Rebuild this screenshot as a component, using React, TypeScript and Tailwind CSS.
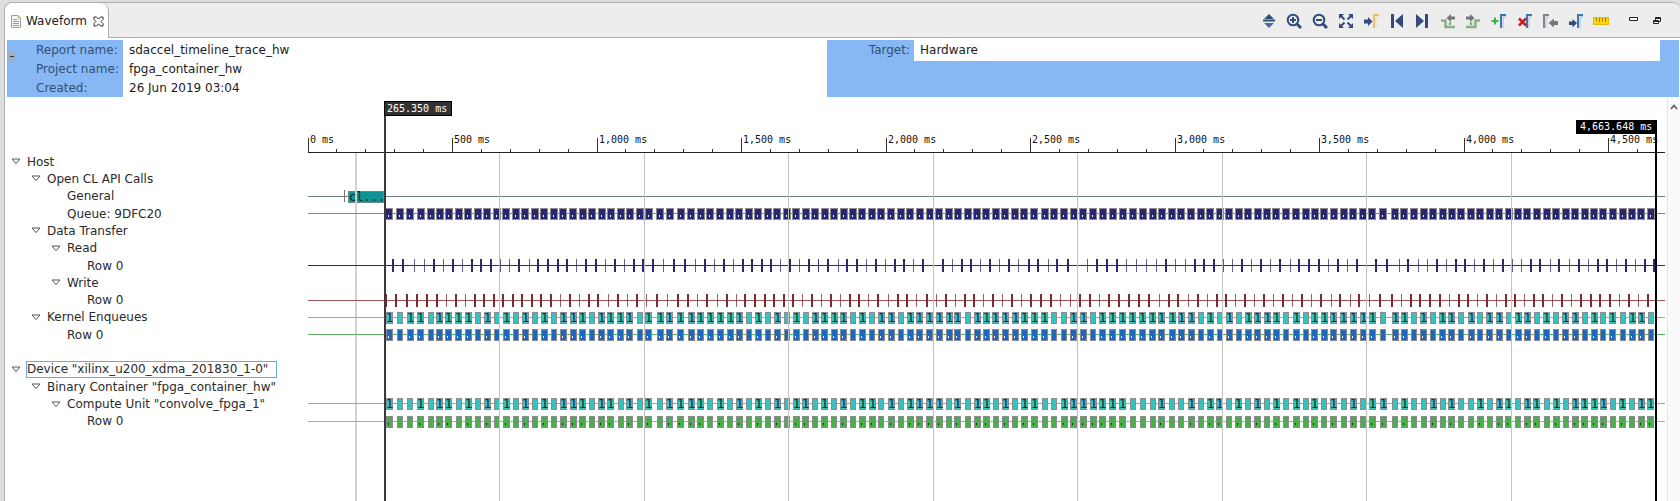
import React from "react";

type Segment = { start: number; marks: string };

/* Event positions are sampled three times per pixel, relative to each segment's start. */
const SAMPLES_PER_PX = 3;

/* Centre of every enqueue, followed by k / c flags: label fits on the kernel row / compute-unit row. */
const enqueueSegments: Segment[] = [
  {
    start: 380,
    marks:
      "27kc 59 91k 122kc 152 179kc 206kc 236k 264kc 293 321kc 350 378kc 407 435kc 465 493kc 522 550kc 580kc 608kc 636 665kc 692kc 722k 749kc 780 806kc 840k 869kc 902kc 934kc 962kc 991k 1020kc 1050k 1077kc 1107 1134kc 1163 1191kc 1220 1248kc 1277c 1306k",
  },
  {
    start: 810,
    marks:
      "44kc 73k 101kc 130 157kc 186c 214k 243kc 273 300kc 329kc 359kc 387kc 417k 443kc 473 501kc 529kc 557k 586kc 615k 643kc 673kc 704k 733 762c 791kc 820kc 850c 878kc 908kc 938kc 968k 998k 1028k 1055kc 1086k 1114k 1143kc 1172 1200kc 1229c 1257k 1286c 1314k",
  },
  {
    start: 1240,
    marks:
      "53kc 82k 109kc 138 168kc 197 224kc 253k 281kc 311k 339kc 369k 396kc 430c 466k 493kc 523 551k 579c 608k 635kc 664 693k 720c 749k 777kc 806c 835k 862kc 890c 920k 948c 977k 1005kc 1034c 1062kc 1090c 1118k 1148c 1176k 1204kc 1232c",
  },
];

/* Tick centres; w marks a transfer that is two pixels wide. */
const readSegments: Segment[] = [
  {
    start: 380,
    marks:
      "38w 68w 102 132 161w 190 218w 247 276w 303w 333w 361 389 418w 447 475w 505w 533w 562w 590 619w 647w 676 704w 733 762w 789w 819w 850 881w 914w 945 974w 1003 1032w 1060 1089w 1116w 1146w 1174w 1202 1231w 1259 1288w 1316",
  },
  {
    start: 810,
    marks:
      "26 55w 84 112w 140w 168 197w 226 254w 281w 310 339w 399w 427 456w 484w 512 541w 569 598w 626 656w 685w 714 742w 773w 801 831 860w 890w 920w 949 979 1009 1039 1067w 1097 1126 1155w 1182w 1212w 1240 1268 1297w",
  },
  {
    start: 1240,
    marks:
      "35 64w 92 121w 150 178w 206w 236w 265 293w 322 350w 379 408w 440w 477 505w 534 562 590w 619 647w 675w 703 732w 760 790w 818 845 874w 901w 930 958w 987 1016w 1045 1073w 1101w 1130 1158w 1187 1216w 1243w",
  },
];

const writeSegments: Segment[] = [
  {
    start: 380,
    marks:
      "17w 49w 82w 112w 142w 170w 198 227w 256 284w 312w 342w 368w 398w 427w 455w 484w 513w 541 570w 599 627w 655w 684 713w 741 770w 798 830w 861 893w 925w 953 982w 1011 1040w 1069 1096w 1125w 1154w 1183w 1212w 1239w 1267 1297w",
  },
  {
    start: 810,
    marks:
      "35 63w 91 121w 148w 176 205w 234 263w 290w 319 350w 378 407w 436 464w 492w 520 549w 577 606w 635 663w 694w 723w 752 782 811w 841w 869 898w 928w 958w 988w 1018w 1048 1077w 1105w 1134 1163w 1192 1220w 1248w 1276 1305w",
  },
  {
    start: 1240,
    marks:
      "43 72w 100 129w 158 186w 215 244w 273 301w 330 358w 387 420w 456w 485 514w 541w 571w 599w 628 656w 683w 712 741w 769 798w 825w 853 882w 910w 938 967w 995 1024w 1052w 1081w 1109w 1138 1166w 1195 1223w",
  },
];

const parse = (segments: Segment[]) =>
  segments.flatMap(({ start, marks }) =>
    marks.split(" ").map((mark) => ({
      x: start + parseInt(mark, 10) / SAMPLES_PER_PX,
      flags: mark.replace(/\d+/, ""),
    })),
  );

const enqueues = parse(enqueueSegments);
const reads = parse(readSegments);
const writes = parse(writeSegments);

const MONO = "font-['DejaVu_Sans_Mono',monospace]";
const AXIS_START = 308;
const AXIS_END = 1665;
const MAJOR = 144.5;

type BlocksProps = {
  y: number;
  fill: string;
  line: string;
  flag?: string;
  mark: "one" | "dot";
  markFill: string;
  wide?: boolean;
};

function Blocks({ y, fill, line, flag, mark, markFill, wide }: BlocksProps) {
  return (
    <g>
      <path d={`M${AXIS_START} ${y + 0.5}H${AXIS_END}`} stroke={line} />
      {enqueues.map(({ x, flags }, i) => {
        const labelled = !flag || flags.includes(flag);
        const w = wide ? 8 : labelled ? 7 : 6;
        const left = Math.round(x - w / 2);
        return (
          <g key={i}>
            <rect x={left + 0.5} y={y - 4.5} width={w - 1} height={11} fill={fill} stroke="#8b8b90" />
            {labelled && mark === "dot" && (
              <rect x={left + Math.floor(w / 2) - 1} y={y + 2} width={1} height={2} fill={markFill} />
            )}
            {labelled && mark === "one" && (
              <text x={left} y={y + 5} fill={markFill} className={`${MONO} text-[12px]`}>
                1
              </text>
            )}
          </g>
        );
      })}
    </g>
  );
}

function Ticks({ y, line, color, items }: { y: number; line: string; color: string; items: typeof reads }) {
  return (
    <g>
      <path d={`M${AXIS_START} ${y + 0.5}H${AXIS_END}`} stroke={line} />
      {items.map(({ x, flags }, i) => (
        <rect
          key={i}
          x={flags ? Math.round(x - 1) : Math.floor(x)}
          y={y - 6}
          width={flags ? 2 : 1}
          height={13}
          fill={color}
          opacity={flags ? 1 : 0.75}
        />
      ))}
    </g>
  );
}

function Timeline() {
  const majors = Array.from({ length: 10 }, (_, i) => i);
  const minors = Array.from({ length: 47 }, (_, i) => i).filter((i) => i % 5 !== 0);
  return (
    <svg className="min-h-[403px] min-w-0 flex-1" role="img" aria-label="Timeline trace" shapeRendering="crispEdges">
      <g transform="translate(-300 -98)">
        <path d="M308 152.5H1665" stroke="#222" />
        {majors.map((i) => {
          const x = Math.floor(AXIS_START + i * MAJOR);
          return (
            <g key={i}>
              <path d={`M${x + 0.5} 138V152`} stroke="#333" />
              <text x={x + 2} y={143} fill="#111" className={`${MONO} text-[10px]`}>
                {`${(i * 500).toLocaleString("en-US")} ms`}
              </text>
            </g>
          );
        })}
        {minors.map((i) => (
          <path key={i} d={`M${Math.floor(AXIS_START + (i * MAJOR) / 5) + 0.5} 149V152`} stroke="#333" />
        ))}

        <path d="M308 196.5H1665" stroke="#6f8080" />
        <path d="M344.5 190V202" stroke="#777" />
        <rect x={348.5} y={191.5} width={35} height={11} fill="#109394" stroke="#5f8c8c" />
        <path d="M356 153V3000" stroke="#d2d2d2" strokeWidth={2} />
        <text x={349} y={201} fill="#06282a" className={`${MONO} text-[12px]`}>
          cl...
        </text>

        <Blocks y={213} fill="#2b2673" line="#6d9090" mark="dot" markFill="#fff" wide />
        <Ticks y={265} line="#302c66" color="#2c2872" items={reads} />
        <Ticks y={300} line="#a05555" color="#7d2a30" items={writes} />
        <Blocks y={317} fill="#33c4c2" line="#55c8c6" flag="k" mark="one" markFill="#052b2b" />
        <Blocks y={334} fill="#1f66bd" line="#5fae5f" flag="k" mark="dot" markFill="#fff" />
        <Blocks y={403} fill="#33c4c2" line="#55c8c6" flag="c" mark="one" markFill="#052b2b" />
        <Blocks y={421} fill="#4aae4c" line="#8cc08c" flag="c" mark="dot" markFill="#0c330c" />

        {Array.from({ length: 8 }, (_, i) => (
          <path key={i} d={`M${Math.floor(499.7 + i * MAJOR) + 0.5} 153V3000`} stroke="#c2c2c2" />
        ))}

        <rect x={384} y={101} width={2} height={2900} fill="#3a3a3e" />
        <rect x={384.5} y={101.5} width={67} height={14} fill="#333" stroke="#000" />
        <text x={387} y={112} fill="#fff" className={`${MONO} text-[10px]`}>
          265.350 ms
        </text>
        <rect x={1655} y={120} width={2} height={2900} fill="#000" />
        <rect x={1576} y={120} width={81} height={14} fill="#000" />
        <text x={1580} y={130} fill="#fff" className={`${MONO} text-[10px]`}>
          4,663.648 ms
        </text>
      </g>
    </svg>
  );
}

const rows: { label: string; depth: number; leaf?: boolean; selected?: boolean }[] = [
  { label: "Host", depth: 0 },
  { label: "Open CL API Calls", depth: 1 },
  { label: "General", depth: 2, leaf: true },
  { label: "Queue: 9DFC20", depth: 2, leaf: true },
  { label: "Data Transfer", depth: 1 },
  { label: "Read", depth: 2 },
  { label: "Row 0", depth: 3, leaf: true },
  { label: "Write", depth: 2 },
  { label: "Row 0", depth: 3, leaf: true },
  { label: "Kernel Enqueues", depth: 1 },
  { label: "Row 0", depth: 2, leaf: true },
  { label: "", depth: 0, leaf: true },
  { label: 'Device "xilinx_u200_xdma_201830_1-0"', depth: 0, selected: true },
  { label: 'Binary Container "fpga_container_hw"', depth: 1 },
  { label: 'Compute Unit "convolve_fpga_1"', depth: 2 },
  { label: "Row 0", depth: 3, leaf: true },
];

const indents = ["pl-[6px]", "pl-[26px]", "pl-[46px]", "pl-[66px]"];

function Tree() {
  return (
    <ul className="mt-[55px] flex h-[277px] w-[295px] shrink-0 flex-col text-[12px] leading-none text-[#2a2a2a]">
      {rows.map((row, i) => (
        <li key={i} className={`flex min-h-0 flex-1 items-center whitespace-nowrap ${indents[row.depth]}`}>
          {row.leaf ? (
            <span className="w-4" />
          ) : (
            <button aria-label={`Collapse ${row.label}`} className="w-4">
              <svg width="10" height="7" viewBox="0 0 10 7" fill="none" stroke="#555">
                <path d="M1 1h8L5 5.6z" />
              </svg>
            </button>
          )}
          <span
            className={
              row.selected
                ? "-ml-px flex h-[17px] w-[251px] items-center border border-[#6ea8d8]"
                : "flex h-[17px] items-center"
            }
          >
            {row.label}
          </span>
        </li>
      ))}
    </ul>
  );
}

const NAVY = "#34497c";
const arrowRight = "M1 6.5h4V4l4.5 4.5L5 13v-2.5H1z";

const Edge = ({ x, color, light }: { x: number; color: string; light: string }) => (
  <>
    <path d={`M${x} 15V2h5`} stroke={color} strokeWidth={2} />
    <path d={`M${x + 2} 15V4h3`} stroke={light} strokeWidth={1} />
  </>
);

const tools: { name: string; art: React.ReactNode }[] = [
  {
    name: "Fit vertically",
    art: (
      <g>
        <path d="M8 1l5 5H3z" fill="#2d5277" />
        <path d="M2 7.5h12" stroke="#2d5277" strokeWidth={2} />
        <path d="M3 10h10l-5 5z" fill="#4a6f98" />
      </g>
    ),
  },
  {
    name: "Zoom in",
    art: (
      <g stroke={NAVY} strokeWidth={2}>
        <circle cx="7" cy="7" r="5.3" />
        <path d="M11 11l4 4" strokeWidth={3} />
        <path d="M4 7h6M7 4v6" />
      </g>
    ),
  },
  {
    name: "Zoom out",
    art: (
      <g stroke={NAVY} strokeWidth={2}>
        <circle cx="7" cy="7" r="5.3" />
        <path d="M11 11l4 4" strokeWidth={3} />
        <path d="M4 7h6" />
      </g>
    ),
  },
  {
    name: "Zoom fit",
    art: (
      <g>
        <path d="M1 1h5L1 6zM15 1v5l-5-5zM1 15v-5l5 5zM15 15h-5l5-5z" fill={NAVY} />
        <path d="M3 3l3.5 3.5M13 3L9.5 6.5M3 13l3.5-3.5M13 13L9.5 9.5" stroke={NAVY} strokeWidth={2} />
      </g>
    ),
  },
  {
    name: "Go to cursor",
    art: (
      <g>
        <path d={arrowRight} fill={NAVY} />
        <Edge x={11} color="#e3c468" light="#f0dca0" />
      </g>
    ),
  },
  {
    name: "Go to start",
    art: (
      <g fill={NAVY}>
        <path d="M2 1h3v14H2zM14 1v14L6 8z" />
      </g>
    ),
  },
  {
    name: "Go to end",
    art: (
      <g fill={NAVY}>
        <path d="M11 1h3v14h-3zM2 1v14l8-7z" />
      </g>
    ),
  },
  {
    name: "Previous transition",
    art: (
      <g>
        <path d="M1 7.5h4.5v6.5H15M10 9v3" stroke="#8bae88" strokeWidth={2.5} />
        <path d="M15 3.5h-4V1L6.5 5l4.500 4V6.500h4z" fill="#73767c" />
      </g>
    ),
  },
  {
    name: "Next transition",
    art: (
      <g>
        <path d="M15 7.5h-4.500v6.500H1M6 9v3" stroke="#8bae88" strokeWidth={2.5} />
        <path d="M1 3.5h4V1l4.500 4L5 9V6.500H1z" fill="#73767c" />
      </g>
    ),
  },
  {
    name: "Add marker",
    art: (
      <g>
        <path d="M0.5 8h7M4 4.500v7" stroke="#36b83c" strokeWidth={2} />
        <Edge x={10} color="#3a78ad" light="#93c3e4" />
      </g>
    ),
  },
  {
    name: "Delete marker",
    art: (
      <g>
        <Edge x={10} color="#3a78ad" light="#93c3e4" />
        <path d="M2 5.5l7 7M9 5.5l-7 7" stroke="#d01820" strokeWidth={2.5} />
      </g>
    ),
  },
  {
    name: "Previous marker",
    art: (
      <g>
        <Edge x={2} color="#7c8790" light="#b9c0c5" />
        <path d="M16 8h-4V5.5L6.500 10l5.500 4.500V12h4z" fill="#73767c" />
      </g>
    ),
  },
  {
    name: "Next marker",
    art: (
      <g>
        <path d="M1 8.5h3.500V6L9 10l-4.500 4.500V12H1z" fill={NAVY} />
        <Edge x={10} color="#3a78ad" light="#93c3e4" />
      </g>
    ),
  },
  {
    name: "Floating ruler",
    art: (
      <g>
        <rect x="0.5" y="4.5" width="15" height="7" fill="#fbd40d" stroke="#e6b800" />
        <path d="M3.5 5v3M6.5 5v4M9.5 5v3M12.5 5v4" stroke="#a67c00" />
      </g>
    ),
  },
];

function TitleBar() {
  return (
    <header className="flex h-[35px] items-stretch rounded-t-lg border-b border-[#adadad] bg-[#ededed]">
      <div className="-mb-px flex w-[104px] items-center rounded-t-lg border-r border-[#adadad] bg-white pl-[6px] pt-px text-[12px] text-[#222]">
        <svg width="10" height="13" viewBox="0 0 10 13" fill="none" className="mr-[5px]">
          <path d="M0.5 0.5H7l2.500 2.500v9.500h-9z" fill="#f2f7fc" stroke="#9aa38c" />
          <path d="M7 0.5V3h2.5" stroke="#c8a860" />
          <path d="M2 4.5h4M2 6.5h6M2 8.5h6M2 10.5h6" stroke="#7ba2d2" />
        </svg>
        <span className="whitespace-nowrap">Waveform</span>
        <button aria-label="Close Waveform" className="ml-[6px]">
          <svg width="11" height="11" viewBox="0 0 11 11" fill="#fff" stroke="#333">
            <path d="M1 1h2.500l2 2.200L7.500 1H10v2.500L8 5.500l2 2V10H7.500l-2-2.200L3.500 10H1V7.500l2-2-2-2z" />
          </svg>
        </button>
      </div>
      <div className="ml-auto flex items-center pt-px">
        <div className="flex w-[358px]">
          {tools.map((tool) => (
            <button key={tool.name} aria-label={tool.name} className="flex flex-1 justify-center">
              <svg width="16" height="16" viewBox="0 0 16 16" fill="none">
                {tool.art}
              </svg>
            </button>
          ))}
        </div>
        <button aria-label="Minimize" className="ml-[7px] flex w-[24px] justify-center">
          <svg width="11" height="16" viewBox="0 0 11 16" fill="#fff" stroke="#222">
            <path d="M1.5 4.5h8v3h-8z" />
          </svg>
        </button>
        <button aria-label="Restore" className="mr-[11px] flex w-[24px] justify-center">
          <svg width="9" height="16" viewBox="0 0 9 16" fill="#fff" stroke="#222">
            <path d="M2.5 4.5h5v4h-5zM2.5 5.5h5M0.5 7.5h5v3h-5zM0.5 8.5h5" />
          </svg>
        </button>
      </div>
    </header>
  );
}

function Details() {
  return (
    <div className="mt-[2px] flex h-[57px] pl-[2px] text-[12px] leading-[19px] text-[#1c1c1c]">
      <div className="flex flex-1">
        <div className="flex w-[116px] shrink-0 bg-[#87b8f5] text-[#31506f]">
          <button
            aria-label="Collapse details"
            className="mt-[12px] flex h-[9px] w-[9px] items-center justify-center bg-[#9ab0c8]"
          >
            <span className="h-px w-[4px] bg-[#333]" />
          </button>
          <div className="ml-[20px] whitespace-nowrap pt-px">
            <div>Report name:</div>
            <div>Project name:</div>
            <div>Created:</div>
          </div>
        </div>
        <div className="pl-[6px] pt-px">
          <div>sdaccel_timeline_trace_hw</div>
          <div>fpga_container_hw</div>
          <div>26 Jun 2019 03:04</div>
        </div>
      </div>
      <div className="mr-px flex w-[852px] items-start bg-[#87b8f5]">
        <div className="w-[87px] pr-[4px] pt-px text-right text-[#31506f]">Target:</div>
        <div className="mr-[19px] h-[21px] flex-1 bg-white pl-[6px] pt-px">Hardware</div>
      </div>
    </div>
  );
}

export default function App() {
  return (
    <div className="flex min-h-screen flex-col overflow-hidden bg-[#dedede] pl-[4px] pt-[2px] font-['DejaVu_Sans',sans-serif]">
      <main className="flex flex-1 flex-col rounded-t-lg border-l border-t border-[#adadad] bg-white">
        <TitleBar />
        <Details />
        <section className="mt-px flex flex-1">
          <Tree />
          <Timeline />
          <div className="w-[13px] border-l border-[#e4e4e4] bg-[#fafafa]">
            <button aria-label="Scroll up" className="flex h-[18px] w-full items-center justify-center">
              <svg width="8" height="6" viewBox="0 0 8 6" fill="none" stroke="#555" strokeWidth="1.5">
                <path d="M1 5l3-3.500L7 5" />
              </svg>
            </button>
          </div>
        </section>
      </main>
    </div>
  );
}
